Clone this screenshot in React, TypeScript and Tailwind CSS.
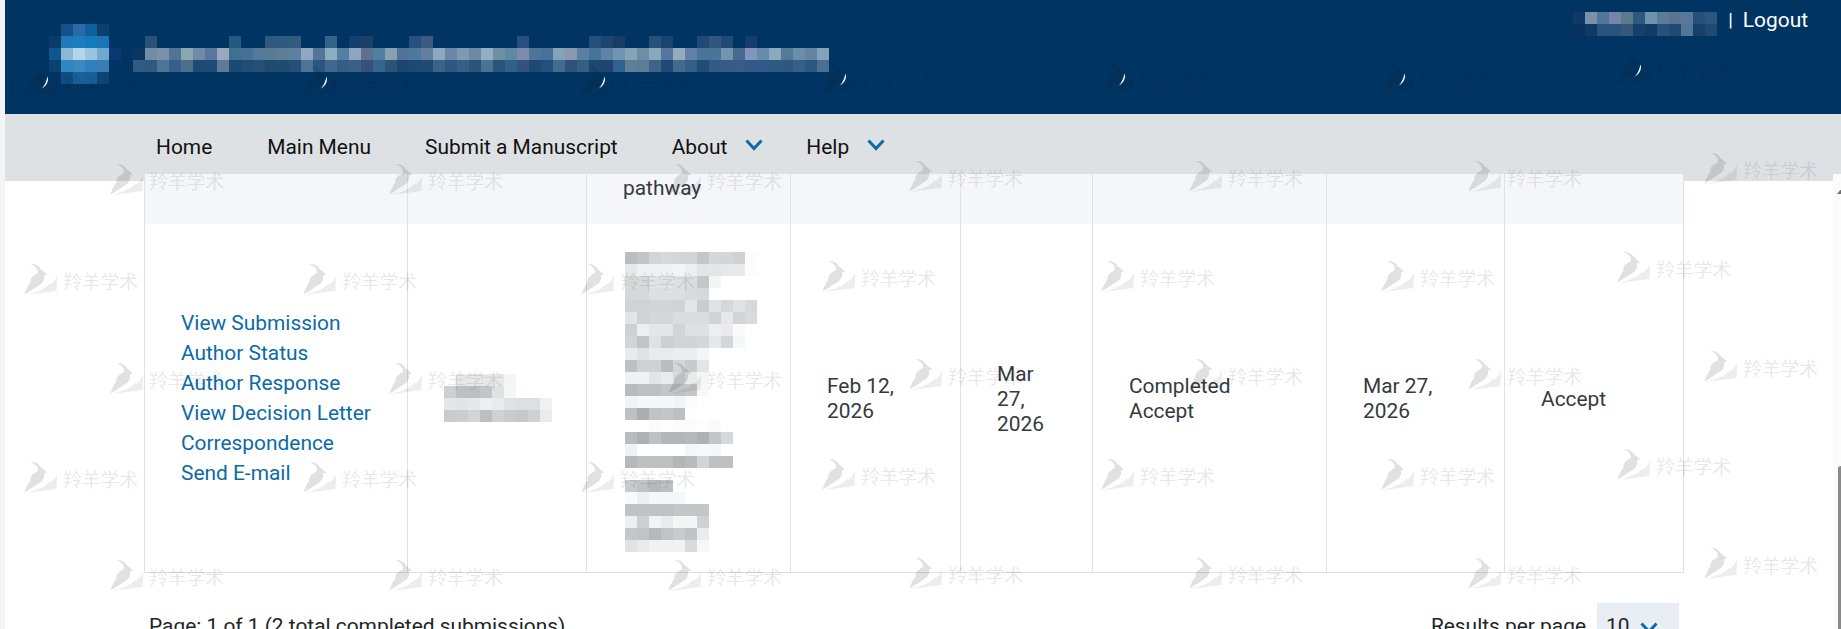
import React from "react";

type Cell = string | null;
const CELL = 12;

function Mosaic({ rows, className = "" }: { rows: Cell[][]; className?: string }) {
  const cols = Math.max(...rows.map((r) => r.length));
  return (
    <svg width={cols * CELL} height={rows.length * CELL} className={`block shrink-0 ${className}`} shapeRendering="crispEdges">
      {rows.map((row, y) =>
        row.map((c, x) => (c ? <rect key={`${x}-${y}`} x={x * CELL} y={y * CELL} width={CELL} height={CELL} fill={c} /> : null))
      )}
    </svg>
  );
}

const s = (t: string): Cell[] => t.split(" ").map((c) => (c === "_" ? null : c));

const logoRows = [
  "_ #14508a #2a6aa6 #0f609f #0a3f6f _",
  "#0c3a6a #1f7ab9 #1c7dbc #127cbb #1a75b4 _",
  "#0f5590 #8ab8d8 #b5d5e8 #9cc4de #6fa8d0 #0c3a70",
  "#0c4070 #2f87c0 #3a88c0 #2f80bc #3a7cb4 _",
  "_ #0f4d80 #1a5f98 #1a5f98 #0c4575 _",
].map(s);

const titleRows = [
  "_ #2a5278 _ _ _ _ _ _ #245a7e _ _ #33587e #2f5a80 #345a80 _ _ #336388 _ #143f6c #1d4068 _ _ _ #265080 #3b5a80 _ _ _ _ _ _ _ #2a4f7f _ _ _ _ _ #22507a #1c4672 #173c66 _ _ #245278 #1a4470 _ _ #1f4a75 #30587e #214b75 _ #183c6c _ _ _ _ _ _",
  "#0a3563 #6e8ea7 #7c91a9 #4f7496 #88a7b3 #6f8ba6 #5877a0 #98a9bd #40708f #4a6f95 #54799a #5a7b96 #5c7f97 #5f7fa0 #8fa8bf #527699 #8badc0 #557ea0 #8ea4c0 #5f6f90 #4f80a0 #8a9fb2 #537298 #4a7b9e #647f9f #8ca8c0 #6a87a5 #7f9ab0 #6f87a3 #93aec3 #6f8fa6 #5f88a3 #7a8cb0 #4e7598 #48709a #84a3b9 #8a99b0 #5d7ea3 #44749a #5e83a6 #6e96b0 #84a4b8 #6f8ea3 #88a8bb #56769f #95acbf #6480a8 #4a7499 #4e7398 #7594b0 #466a90 #8196bb #658ca9 #8ba9bd #56799a #6a8dab #6683a2 #85a1bb",
  "#2f5c82 #31597e #4f7596 #345f88 #4c7089 #1f4a72 #214a76 #5d7b98 #1a4a70 #1f4d74 #274f75 #204a70 #214c72 #264f78 #4f7596 #2b5680 #41688f #335f85 #3a6088 #35507a #386490 #2a5578 #1c4672 #1c4a72 #204a72 #3c6488 #2f5880 #355f85 #2c5478 #4a7292 #2b5578 #32608a #33537c #1d4a72 #22507a #436b8d #2f5078 #335f85 #1b4670 #1f4672 #2f6290 #5f7f98 #5b7d96 #3e6488 #1f4a78 #436a8c #33608a #214c78 #335a85 #365c85 #385c85 #33598a #33588a #2d5b80 #2e5880 #365f85 #2c5880 #4a6f90",
].map(s);

const userRows = [
  "#0f3a66 #7c90a8 #4f769c #7584ab #5b7a8e #30587e #6e93ad #5c7b98 #577694 #5a7998 #25507a #2b5680",
  "#08305e #0f3a66 #29527d #29527d #34587a #173f6c #113c68 #26527a #1f4a72 #537799 #173f6a #1f4a72",
].map(s);

const authorRows = [
  "_ #e5e7e9 #e5e7e9 #e5e7e9 #e5e7e9 #f4f5f5",
  "#cdd0d2 #bdc0c3 #bcbfc2 #c3c6c8 #e0e2e4 #f5f6f6",
  "#e4e6e8 #e2e4e6 #e6e8ea #edeff0 #e8eaec #dfe2e4 #dde0e2 #dce0e2 #f0f1f2",
  "#c9cccf #cbced0 #d2d4d6 #bcbfc2 #cfd2d4 #c8cbce #c6c9cc #cfd2d4 #eaebec",
].map(s);

const abstractRows = [
  "#b9bdc0 #c2c5c8 #d2d5d8 #d6d9db #d3d6d9 #d2d5d7 #c3c7ca #d5d8da #d3d6d9 #ced2d4 #fcfcfc",
  "#e6e8ea #f0f1f2 #eff0f2 #f0f1f2 #f3f4f4 #eceef0 #e2e4e6 #e4e6e8 #e6e8ea #e7e9ea #fcfcfc",
  "#d8dadc #d6d8da #e0e2e4 #e0e2e4 #dfe1e3 #dadcde #c4c8cb #f4f5f5",
  "#d5d8da #d6d9db #dde0e2 #dde0e2 #dcdfe1 #d8dbdd #d6d9db",
  "#d0d3d6 #d0d3d6 #d2d5d8 #d2d5d8 #d0d3d6 #e3e5e7 #c9cdd0 #e0e3e5 #d5d8da #e0e3e5 #d6d9dc",
  "#e2e4e6 #d0d3d6 #d4d7da #d4d7da #dadde0 #dadde0 #dadde0 #d0d4d7 #e6e8ea #d2d5d8 #d8dbde",
  "#cdd1d4 #eceef0 #e4e6e8 #e4e6e8 #d2d5d8 #dee1e3 #dee1e3 #eceef0 #e8eaec #fafafa",
  "#d2d5d8 #c0c4c7 #dfe1e3 #cdd0d3 #d2d5d8 #d1d4d7 #d4d7da #e6e8ea #d4d7da #f6f7f7",
  "#e8eaec #dfe1e3 #e8eaec #e8eaec #ebedee #ecedee #f4f5f5",
  "#bcc0c3 #cfd2d5 #cfd2d5 #b9bdc0 #d2d5d8 #c8cbce #e2e4e6",
  "#f0f1f2 #f0f1f2 #e2e4e6 #e8eaec #d8dadc #e8eaec #f4f5f5",
  "#b8bcbf #bdc1c4 #bdc1c4 #c4c7ca #c0c4c7 #c4c7ca #f8f8f8",
  "#f2f3f4 #f6f7f7 #f6f7f7 #f6f7f7 #f2f3f4 #fbfbfb",
  "#bdc1c4 #a9aeb1 #bfc3c6 #c4c7ca #bcc0c3 #fdfdfd",
  "_ _ #fbfbfb #fdfdfd #fbfbfb #fbfbfb #fdfdfd #fafafa",
  "#b8bcbf #adb1b4 #bdc1c4 #b2b6b9 #b2b6b9 #b5b9bc #adb1b4 #c2c6c9 #d6d9db",
  "#f0f1f2 _ _ _ _ #f5f6f6 #f8f8f8 #f6f7f7",
  "#b5b9bc #bcc0c3 #bcc0c3 #bcc0c3 #b2b6b9 #b8bcbf #d2d5d8 #bcc0c3 #bcc0c3",
  "_ _ _ _ _",
  "#c8cbce #bfc3c6 #b5b9bc #bcc0c3",
  "#fafafa #eeeff0 #f6f7f7 #f6f7f7 #f6f7f7",
  "#bfc3c6 #bfc3c6 #bfc3c6 #bfc3c6 #c4c7ca #c4c7ca #c4c7ca",
  "#eceef0 #cdd0d3 #f2f3f4 #e8eaec #f4f5f5 #f4f5f5 #cfd2d5",
  "#c4c7ca #c0c4c7 #b5b9bc #c0c4c7 #c8cbce #bfc3c6 #eaecee",
  "#e0e2e4 #e8eaec #f0f1f2 #f0f1f2 #f0f1f2 #d8dbde #f6f7f7",
].map(s);

function Chevron({ className = "" }: { className?: string }) {
  return (
    <svg viewBox="0 0 18 12" width="18" height="12" className={`block ${className}`} fill="none" stroke="#0b6aa8" strokeWidth="3">
      <polyline points="1.5,1.5 9,9.5 16.5,1.5" />
    </svg>
  );
}

function Watermark({ x, y, crescent }: { x: number; y: number; crescent: boolean }) {
  return (
    <div className="absolute flex items-start" style={{ left: x, top: y }}>
      <svg viewBox="0 0 34 32" width="34" height="32" className="block shrink-0">
        <path
          fill="rgba(20,20,25,0.13)"
          d="M7 1C12 0.5 16 2.5 18 6.5L19.5 7.5L24 11.5L21 12.2C21.5 15 21 18 18.5 20.5L14 23.5L8 27.5L1.5 31.5C3 26.5 4.5 23.5 7.5 19.5C7 17 8 14 11 12.5L15 10L14.5 6.5C13 3.5 10 2 7 1Z"
        />
        <path fill="rgba(20,20,25,0.08)" d="M34 13L33.5 28L3 32C14 29 22 26 26 21C28 22 31 19 34 13Z" />
        {crescent && <path fill="#ffffff" d="M24.5 11.5C26 15.5 24 20.5 19 23.5C22 20 23.5 16 24.5 11.5Z" />}
      </svg>
      <span className="ml-[6px] mt-[6px] text-[19px] leading-[24px] tracking-[-0.3px] whitespace-nowrap text-[rgba(20,20,25,0.11)] [font-family:'Noto_Sans_CJK_SC',sans-serif]">
        羚羊学术
      </span>
    </div>
  );
}

const wmGroups: { xs: number[]; ys: number[] }[] = [
  { xs: [23, 302, 580], ys: [65, 263, 461] },
  { xs: [109, 388, 667], ys: [163, 362, 559] },
  { xs: [821, 1100, 1380], ys: [62, 260, 458] },
  { xs: [908, 1188, 1467], ys: [160, 358, 557] },
  { xs: [1616], ys: [53, 251, 448] },
  { xs: [1703], ys: [152, 350, 547] },
];

const navItems = [
  { label: "Home", gap: "mr-[55px]" },
  { label: "Main Menu", gap: "mr-[54px]" },
  { label: "Submit a Manuscript", gap: "mr-[54px]" },
];

const links = ["View Submission", "Author Status", "Author Response", "View Decision Letter", "Correspondence", "Send E-mail"];

const tdBase = "border-l border-b border-[#dee2e6] align-middle pl-[36px] pr-[36px] text-[#343a40]";
const tdText = `${tdBase} pt-[2px]`;

export default function App() {
  return (
    <div className="relative h-[629px] w-[1841px] overflow-hidden bg-[#f4f4f4] pl-[5px] text-[20.9px] leading-[25px] [font-family:Roboto,sans-serif]">
      <header className="flex h-[114px] items-start bg-[#003462] pl-[44px] pr-[33px]">
        <Mosaic rows={logoRows} className="mt-[24px]" />
        <Mosaic rows={titleRows} className="ml-[12px] mt-[36px]" />
        <div className="ml-auto flex items-start pt-[8px] text-white">
          <Mosaic rows={userRows} className="mt-[4px]" />
          <span className="ml-[11px] text-[19px] leading-[24px]">|</span>
          <a className="ml-[10px] leading-[24px]">Logout</a>
        </div>
      </header>

      <nav className="flex h-[67px] items-start bg-[#dee1e4] pl-[151px] pt-[21px] text-[#111111]">
        {navItems.map((n) => (
          <a key={n.label} className={n.gap}>
            {n.label}
          </a>
        ))}
        <a>About</a>
        <Chevron className="ml-[18px] mt-[4px] mr-[43px]" />
        <a>Help</a>
        <Chevron className="ml-[18px] mt-[4px]" />
      </nav>

      <main className="flex bg-white">
        <div className="relative -mt-[7px] flex-1 pl-[139px]">
          <table className="w-[1540px] table-fixed border-separate border-spacing-0">
            <colgroup>
              <col className="w-[263px]" />
              <col className="w-[179px]" />
              <col className="w-[204px]" />
              <col className="w-[170px]" />
              <col className="w-[132px]" />
              <col className="w-[234px]" />
              <col className="w-[178px]" />
              <col className="w-[180px]" />
            </colgroup>
            <tbody>
              <tr className="h-[50px] bg-[#f5f6fa]">
                <td className="border-l border-[#dee2e6]" />
                <td className="border-l border-[#dee2e6]" />
                <td className="border-l border-[#dee2e6] pl-[36px] pt-[2px] align-top text-[#343a40]">pathway</td>
                <td className="border-l border-[#dee2e6]" />
                <td className="border-l border-[#dee2e6]" />
                <td className="border-l border-[#dee2e6]" />
                <td className="border-l border-[#dee2e6]" />
                <td className="border-x border-[#dee2e6]" />
              </tr>
              <tr className="h-[349px] bg-white">
                <td className={tdBase}>
                  <ul className="flex flex-col whitespace-nowrap leading-[30px] text-[#0b6aa8]">
                    {links.map((l) => (
                      <li key={l}>
                        <a>{l}</a>
                      </li>
                    ))}
                  </ul>
                </td>
                <td className={tdBase}>
                  <Mosaic rows={authorRows} />
                </td>
                <td className={tdBase}>
                  <Mosaic rows={abstractRows} className="mt-[8px] ml-[2px]" />
                </td>
                <td className={tdText}>Feb 12, 2026</td>
                <td className={tdText}>Mar 27, 2026</td>
                <td className={tdText}>
                  <div>Completed</div>
                  <div>Accept</div>
                </td>
                <td className={tdText}>Mar 27, 2026</td>
                <td className={`${tdText} border-r`}>Accept</td>
              </tr>
            </tbody>
          </table>

          <div className="flex items-start justify-between pl-[5px] pr-[154px] pt-[30px] text-[#212529]">
            <span className="mt-[11px]">Page: 1 of 1 (2 total completed submissions)</span>
            <div className="flex items-start">
              <span className="mt-[11px]">Results per page</span>
              <div className="ml-[11px] flex h-[60px] w-[82px] items-start bg-[#e9eef5] pl-[9px] pt-[11px]">
                <span>10</span>
                <Chevron className="ml-[11px] mt-[8px]" />
              </div>
            </div>
          </div>
        </div>

        <aside className="relative -mt-[7px] h-[462px] w-[8px] shrink-0 bg-[#fbfbfb]">
          <div className="absolute left-[4px] top-[14px] h-0 w-0 border-x-[5px] border-b-[6px] border-x-transparent border-b-[#6f6f6f]" />
          <div className="absolute bottom-0 left-[5px] top-[292px] w-[3px] rounded-tl-[3px] bg-[#8a8a8a]" />
        </aside>
      </main>

      <div className="pointer-events-none absolute inset-0">
        {wmGroups.flatMap((g) =>
          g.xs.flatMap((x) => g.ys.map((y) => <Watermark key={`${x}-${y}`} x={x} y={y} crescent={y < 70} />))
        )}
      </div>
    </div>
  );
}
